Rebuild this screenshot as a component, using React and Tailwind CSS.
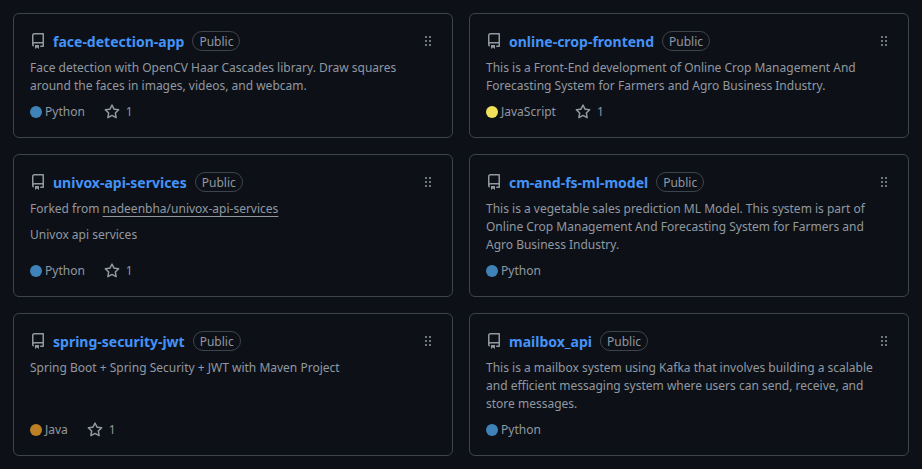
const repoPath = "M2 2.5A2.5 2.5 0 0 1 4.5 0h8.75a.75.75 0 0 1 .75.75v12.5a.75.75 0 0 1-.75.75h-2.5a.75.75 0 0 1 0-1.5h1.75v-2h-8a1 1 0 0 0-.714 1.7.75.75 0 1 1-1.072 1.05A2.495 2.495 0 0 1 2 11.5Zm10.5-1h-8a1 1 0 0 0-1 1v6.708A2.486 2.486 0 0 1 4.5 9h8ZM5 12.25a.25.25 0 0 1 .25-.25h3.5a.25.25 0 0 1 .25.25v3.25a.25.25 0 0 1-.4.2l-1.45-1.087a.249.249 0 0 0-.3 0L5.4 15.7a.25.25 0 0 1-.4-.2Z";
const gripPath = "M10 13a1 1 0 1 1 0-2 1 1 0 0 1 0 2Zm0-4a1 1 0 1 1 0-2 1 1 0 0 1 0 2Zm-4 4a1 1 0 1 1 0-2 1 1 0 0 1 0 2Zm5-9a1 1 0 1 1-2 0 1 1 0 0 1 2 0ZM7 8a1 1 0 1 1-2 0 1 1 0 0 1 2 0ZM6 5a1 1 0 1 1 0-2 1 1 0 0 1 0 2Z";
const starPath = "M8 .25a.75.75 0 0 1 .673.418l1.882 3.815 4.21.612a.75.75 0 0 1 .416 1.279l-3.046 2.97.719 4.192a.751.751 0 0 1-1.088.791L8 12.347l-3.766 1.98a.75.75 0 0 1-1.088-.79l.72-4.194L.818 6.374a.75.75 0 0 1 .416-1.28l4.21-.611L7.327.668A.75.75 0 0 1 8 .25Zm0 2.445L6.615 5.5a.75.75 0 0 1-.564.41l-3.097.45 2.24 2.184a.75.75 0 0 1 .216.664l-.528 3.084 2.769-1.456a.75.75 0 0 1 .698 0l2.77 1.456-.53-3.084a.75.75 0 0 1 .216-.664l2.24-2.183-3.096-.45a.75.75 0 0 1-.564-.41L8 2.694Z";

function Icon({ d, size = 16, className = "" }) {
  return <svg width={size} height={size} viewBox="0 0 16 16" fill="currentColor" className={className}><path d={d} /></svg>;
}

const repos = [
  { name: "face-detection-app", desc: ["Face detection with OpenCV Haar Cascades library. Draw squares", "around the faces in images, videos, and webcam."], lang: "Python", color: "bg-[#3f82b8]", stars: 1 },
  { name: "online-crop-frontend", desc: ["This is a Front-End development of Online Crop Management And", "Forecasting System for Farmers and Agro Business Industry."], lang: "JavaScript", color: "bg-[#f1e05a]", stars: 1 },
  { name: "univox-api-services", fork: "nadeenbha/univox-api-services", desc: ["Univox api services"], lang: "Python", color: "bg-[#3f82b8]", stars: 1 },
  { name: "cm-and-fs-ml-model", desc: ["This is a vegetable sales prediction ML Model. This system is part of", "Online Crop Management And Forecasting System for Farmers and", "Agro Business Industry."], lang: "Python", color: "bg-[#3f82b8]" },
  { name: "spring-security-jwt", desc: ["Spring Boot + Spring Security + JWT with Maven Project"], lang: "Java", color: "bg-[#bd8024]", stars: 1 },
  { name: "mailbox_api", desc: ["This is a mailbox system using Kafka that involves building a scalable", "and efficient messaging system where users can send, receive, and", "store messages."], lang: "Python", color: "bg-[#3f82b8]" },
];

function Card({ r }) {
  return (
    <div className="flex flex-col rounded-md border border-[#3d444d] p-4">
      <div className="flex h-[22px] items-center">
        <Icon d={repoPath} className="text-[#9198a1] mr-[7px] shrink-0" />
        <span className="text-sm font-bold text-[#4493f8] leading-[21px]">{r.name}</span>
        <span className="ml-2 rounded-full border border-[#3d444d] px-[6px] pt-px text-xs leading-[17px] text-[#9198a1]">Public</span>
        <Icon d={gripPath} className="ml-auto text-[#9198a1]" />
      </div>
      {r.fork && (
        <p className="mt-[7px] text-xs leading-[18px] text-[#9198a1]">
          Forked from <span className="underline underline-offset-[3px]">{r.fork}</span>
        </p>
      )}
      <p className={`${r.fork ? "mt-2" : "mt-[7px]"} mb-2 text-xs leading-[18px] text-[#9198a1]`}>
        {r.desc.map((l) => <span key={l} className="block whitespace-nowrap">{l}</span>)}
      </p>
      <div className="mt-auto flex items-center text-xs leading-[18px] text-[#9198a1]">
        <span className={`h-3 w-3 rounded-full ${r.color} mr-[3px]`} />
        <span>{r.lang}</span>
        {r.stars && (
          <>
            <Icon d={starPath} className="ml-[19px] mr-[6px]" />
            <span>{r.stars}</span>
          </>
        )}
      </div>
    </div>
  );
}

export default function App() {
  return (
    <div className="min-h-[469px] bg-[#0d1117] px-[13px] pt-[13px] font-['Noto_Sans',sans-serif]">
      <div className="grid grid-cols-2 gap-4 [grid-template-rows:125px_143px_143px]">
        {repos.map((r) => <Card key={r.name} r={r} />)}
      </div>
    </div>
  );
}
